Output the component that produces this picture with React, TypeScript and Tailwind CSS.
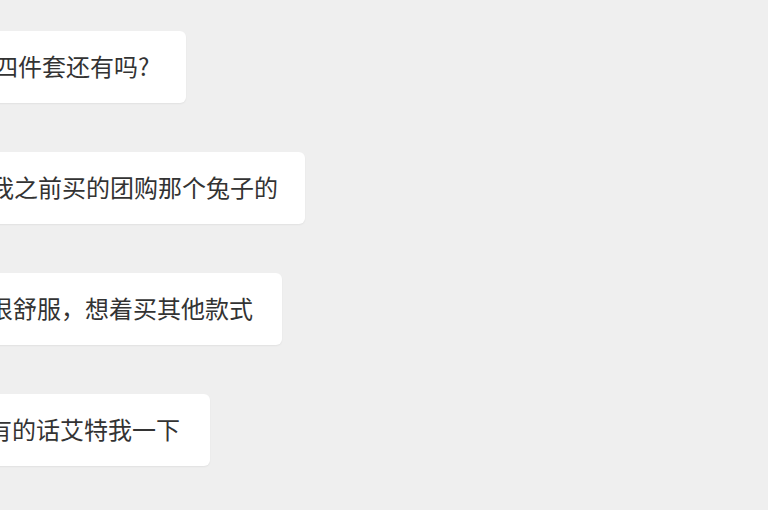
const messages = [
  { text: '四件套还有吗?', box: '-ml-[34px] pr-[37px]' },
  { text: '我之前买的团购那个兔子的', box: '-ml-[38px] pr-[27px]' },
  { text: '很舒服，想着买其他款式', box: '-ml-[39px] pr-[29px]' },
  { text: '有的话艾特我一下', box: '-ml-[40px] pr-[30px]' },
];

export default function App() {
  return (
    <div className="w-[768px] h-[510px] overflow-hidden bg-[#efefef] font-['Noto_Sans_CJK_SC','Noto_Sans',sans-serif]">
      <div className="flex flex-col items-start gap-[49px] pt-[31px]">
        {messages.map((m) => (
          <div
            key={m.text}
            className={`${m.box} flex h-[72px] items-center whitespace-nowrap rounded-md bg-white pl-[28px] pb-[2px] text-[24px] leading-none text-[#333333] shadow-[0_1px_2px_rgba(0,0,0,0.06)]`}
          >
            {m.text}
          </div>
        ))}
      </div>
    </div>
  );
}
